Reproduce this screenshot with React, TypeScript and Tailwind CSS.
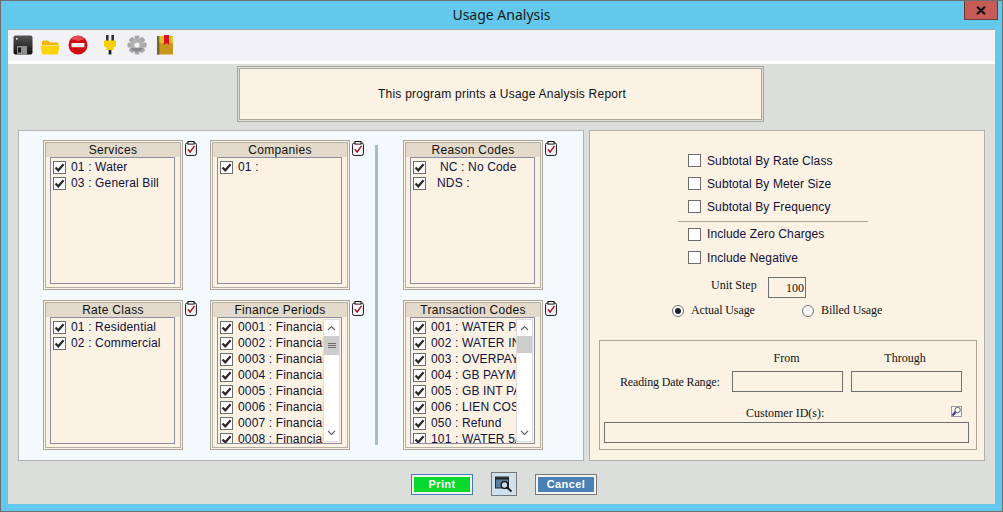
import React from "react";

function Check({ checked = true }: { checked?: boolean }) {
  return (
    <span className="w-[13px] h-[13px] shrink-0 border border-[#6d6d6d] bg-white flex items-center justify-center">
      {checked && (
        <svg width="11" height="11" viewBox="0 0 11 11">
          <path d="M1.5 5.5 L4.3 8.3 L9.6 2.2" fill="none" stroke="#2b2b2b" strokeWidth="2.3" />
        </svg>
      )}
    </span>
  );
}

function ClipIcon() {
  return (
    <svg width="12" height="15" viewBox="0 0 12 15" className="shrink-0 mt-px">
      <rect x="0.6" y="2" width="10.8" height="12.4" rx="1.6" fill="#fff" stroke="#111" strokeWidth="1" />
      <rect x="3" y="0.5" width="6" height="2.6" fill="#fff" stroke="#111" strokeWidth="1" />
      <path d="M2.8 8.2 L5.1 11 L9.5 4.8" fill="none" stroke="#a3121f" strokeWidth="1.4" />
    </svg>
  );
}

function Scrollbar({ thumb, grip }: { thumb: number; grip?: boolean }) {
  return (
    <div className="w-[17px] shrink-0 my-px mr-px bg-white border border-[#dcdcdc] flex flex-col items-stretch">
      <div className="h-[16px] shrink-0 flex items-center justify-center">
        <svg width="9" height="6" viewBox="0 0 9 6"><path d="M1 5 L4.5 1.5 L8 5" fill="none" stroke="#606060" strokeWidth="1.1" /></svg>
      </div>
      <div className="shrink-0 bg-[#cdcdcd] flex flex-col items-center justify-center gap-px" style={{ height: thumb }}>
        {grip && (
          <>
            <span className="w-[8px] h-px bg-[#6a6a6a]" />
            <span className="w-[8px] h-px bg-[#6a6a6a]" />
            <span className="w-[8px] h-px bg-[#6a6a6a]" />
          </>
        )}
      </div>
      <div className="flex-1" />
      <div className="h-[16px] shrink-0 flex items-center justify-center">
        <svg width="9" height="6" viewBox="0 0 9 6"><path d="M1 1 L4.5 4.5 L8 1" fill="none" stroke="#606060" strokeWidth="1.1" /></svg>
      </div>
    </div>
  );
}

type Row = { text: string; indent?: number };

function Group({ title, rows, thumb, grip }: { title: string; rows: Row[]; thumb?: number; grip?: boolean }) {
  return (
    <div className="flex gap-[2px] w-[154px]">
      <div className="w-[140px] h-[150px] shrink-0 border border-[#aaa69c] p-px bg-[#fbf2e3]">
        <div className="h-full border border-[#b5b0a6] flex flex-col">
          <div className="h-[14px] shrink-0 bg-[#e3dacb] text-center text-[12px] leading-[14px] tracking-[0.3px] text-[#111]">
            {title}
          </div>
          <div className="flex-1 min-h-0 ml-[4px] mr-[5px] mb-[3px] border border-[#8b8c9e] flex">
            <div className="flex-1 min-w-0 overflow-hidden pt-px pl-[2px]">
              {rows.map((r) => (
                <div key={r.text} className="h-[16px] flex items-center gap-[5px] whitespace-nowrap text-[12px] tracking-[0.15px] text-[#10103a]">
                  <Check />
                  <span style={r.indent ? { marginLeft: r.indent } : undefined}>{r.text}</span>
                </div>
              ))}
            </div>
            {thumb !== undefined && <Scrollbar thumb={thumb} grip={grip} />}
          </div>
        </div>
      </div>
      <ClipIcon />
    </div>
  );
}

function Opt({ label, h }: { label: string; h: number }) {
  return (
    <div className="flex items-center gap-[6px] text-[12px] tracking-[0.1px] text-[#10103a]" style={{ height: h }}>
      <Check checked={false} />
      <span>{label}</span>
    </div>
  );
}

function Radio({ on, label }: { on?: boolean; label: string }) {
  return (
    <div className="flex items-center gap-[7px]">
      <span className="w-[12px] h-[12px] rounded-full border border-[#707070] bg-white flex items-center justify-center">
        {on && <span className="w-[6px] h-[6px] rounded-full bg-[#222]" />}
      </span>
      <span className="pb-[2px] tracking-[-0.1px]">{label}</span>
    </div>
  );
}

const finance = ["0001", "0002", "0003", "0004", "0005", "0006", "0007", "0008"].map((c) => ({ text: `${c} : Financial Period` }));
const trans = ["001 : WATER PAYMENT", "002 : WATER INTEREST", "003 : OVERPAYMENT", "004 : GB PAYMENT", "005 : GB INT PAYMENT", "006 : LIEN COSTS", "050 : Refund", "101 : WATER 5/8"].map((text) => ({ text }));

const inputCls = "border border-[#6f6f6f] bg-[#fbf2e3] h-[21px]";

export default function App() {
  return (
    <div className="w-[1003px] h-[512px] border border-[#6b6f72] bg-[#62c9ec] relative overflow-hidden font-[Liberation_Sans]">
      <div className="h-[28px] flex items-center justify-center text-[14px] text-[#1a1a1a] font-[Noto_Sans] pb-[1px]">
        Usage Analysis
      </div>
      <div className="absolute top-0 right-[4px] w-[34px] h-[19px] bg-[#c75b55] border border-t-0 border-[#6b3a38] flex items-center justify-center">
        <svg width="10" height="9" viewBox="0 0 10 9"><path d="M1 0.8 L9 8.2 M9 0.8 L1 8.2" stroke="#111" strokeWidth="2.2" /></svg>
      </div>

      <div className="ml-[7px] w-[987px] h-[475px] bg-[#dcdedb] flex flex-col">
        <div className="h-[32px] shrink-0 bg-[#f2f1f5] border-t border-[#9ba6ab] flex items-center pl-[5px] pb-[1px]">
          <svg width="20" height="20" viewBox="0 0 20 20" className="ml-0">
            <defs>
              <linearGradient id="fl" x1="0" y1="0" x2="0" y2="1"><stop offset="0" stopColor="#555" /><stop offset="1" stopColor="#111" /></linearGradient>
            </defs>
            <rect x="0.5" y="0.5" width="19" height="19" rx="2" fill="url(#fl)" />
            <rect x="3" y="3" width="1.6" height="1.6" fill="#eee" />
            <rect x="4" y="11" width="10" height="8" fill="#8f8f8f" />
            <rect x="5" y="12.5" width="3" height="5" fill="#1a1a1a" />
          </svg>
          <svg width="20" height="16" viewBox="0 0 20 16" className="ml-[7px] mt-[4px]">
            <path d="M2 3 Q2 1.5 3.5 1.5 L8 1.5 L10 3.5 L17 3.5 Q18.5 3.5 18.5 5 L18.5 6 L2 6 Z" fill="#f2b705" />
            <path d="M0.5 6.5 L19.5 6.5 L18 15 Q18 15.5 17 15.5 L3 15.5 Q2 15.5 2 15 Z" fill="#ffd20a" />
          </svg>
          <svg width="20" height="20" viewBox="0 0 20 20" className="ml-[8px]">
            <circle cx="10" cy="10" r="9.5" fill="#cf0a12" />
            <path d="M3 4 A9 9 0 0 1 17 4 L10 6 Z" fill="#e24b50" />
            <rect x="3.5" y="8" width="13" height="4.2" fill="#f3f0ee" />
          </svg>
          <svg width="14" height="20" viewBox="0 0 14 20" className="ml-[15px]">
            <rect x="3" y="0" width="2.6" height="6" fill="#333" />
            <rect x="8.4" y="0" width="2.6" height="6" fill="#333" />
            <path d="M1 5.5 L13 5.5 L13 11 L10 13 L11 15 L3 15 L4 13 L1 11 Z" fill="#f6cf00" />
            <rect x="5.6" y="15" width="2.8" height="4.5" fill="#222" />
          </svg>
          <svg width="20" height="20" viewBox="0 0 20 20" className="ml-[10px]">
            <g fill="#a8a8a8">
              <rect x="7.5" y="0.5" width="5" height="19" rx="1" />
              <rect x="7.5" y="0.5" width="5" height="19" rx="1" transform="rotate(45 10 10)" />
              <rect x="7.5" y="0.5" width="5" height="19" rx="1" transform="rotate(90 10 10)" />
              <rect x="7.5" y="0.5" width="5" height="19" rx="1" transform="rotate(135 10 10)" />
            </g>
            <circle cx="10" cy="10" r="6.6" fill="#b0b0b0" />
            <path d="M4 13 A6.6 6.6 0 0 0 16 13 Z" fill="#8a8a8a" />
            <circle cx="10" cy="10" r="2.6" fill="#f2f1f5" />
          </svg>
          <svg width="16" height="20" viewBox="0 0 16 20" className="ml-[10px]">
            <rect x="0" y="1" width="16" height="18.5" fill="#c8961e" />
            <rect x="0" y="1" width="2.4" height="18.5" fill="#6f6a2c" />
            <rect x="2.4" y="1" width="13.6" height="7" fill="#e3c02a" />
            <path d="M7 0 L12 0 L12 10 L9.5 8 L7 10 Z" fill="#e0101c" />
          </svg>
        </div>
        <div className="h-[3px] shrink-0 bg-white" />

        <div className="ml-[229px] mt-[2px] w-[527px] h-[56px] shrink-0 border border-[#aaa69c] p-px">
          <div className="h-full border border-[#aaa69c] bg-[#fbf2e3] flex items-center justify-center pl-[3px] text-[12px] tracking-[0.23px] text-[#111]">
            This program prints a Usage Analysis Report
          </div>
        </div>

        <div className="mt-[8px] ml-[10px] flex gap-[5px]">
          <div className="w-[566px] h-[331px] border border-[#b0b2b2] bg-[#f4f9fd] pl-[24px] pt-[9px] flex">
            <div className="flex flex-col gap-[10px]">
              <Group title="Services" rows={[{ text: "01 : Water" }, { text: "03 : General Bill" }]} />
              <Group title="Rate Class" rows={[{ text: "01 : Residential" }, { text: "02 : Commercial" }]} />
            </div>
            <div className="flex flex-col gap-[10px] ml-[13px]">
              <Group title="Companies" rows={[{ text: "01 :" }]} />
              <Group title="Finance Periods" rows={finance} thumb={19} grip />
            </div>
            <div className="w-[3px] h-[300px] mt-[5px] ml-[11px] bg-[#a3bdd0]" />
            <div className="flex flex-col gap-[10px] ml-[25px]">
              <Group title="Reason Codes" rows={[{ text: "NC : No Code", indent: 9 }, { text: "NDS :", indent: 6 }]} />
              <Group title="Transaction Codes" rows={trans} thumb={17} />
            </div>
          </div>

          <div className="w-[396px] h-[331px] border border-[#b0aea8] bg-[#fbf2e3] relative">
            <div className="pl-[98px] pt-[18px]">
              <Opt label="Subtotal By Rate Class" h={23} />
              <Opt label="Subtotal By Meter Size" h={23} />
              <Opt label="Subtotal By Frequency" h={23} />
            </div>
            <div className="ml-[88px] mt-[3px] w-[190px] h-px bg-[#aaa69c]" />
            <div className="pl-[98px]">
              <Opt label="Include Zero Charges" h={24} />
              <Opt label="Include Negative" h={23} />
            </div>
            <div className="font-[Liberation_Serif] text-[12px] text-[#111]">
              <div className="flex items-center mt-[7px] ml-[121px]">
                <span className="w-[57px] pb-[4px]">Unit Step</span>
                <span className="w-[38px] h-[21px] border border-[#6f6f6f] text-right pr-[1px] leading-[20px]">100</span>
              </div>
              <div className="flex mt-[5px] ml-[82px] h-[16px] items-center">
                <div className="w-[130px]"><Radio on label="Actual Usage" /></div>
                <Radio label="Billed Usage" />
              </div>
              <div className="ml-[9px] mt-[21px] w-[378px] h-[110px] border border-[#aaa69c]">
                <div className="flex pl-[20px] pt-[8px] h-[30px]">
                  <span className="w-[111px]" />
                  <span className="w-[111px] text-center">From</span>
                  <span className="w-[8px]" />
                  <span className="w-[111px] text-center pr-[1px]">Through</span>
                </div>
                <div className="flex items-center pl-[20px]">
                  <span className="w-[99px] mr-[13px] whitespace-nowrap tracking-[-0.16px]">Reading Date Range:</span>
                  <div className={`w-[111px] ${inputCls}`} />
                  <div className={`w-[111px] ml-[8px] ${inputCls}`} />
                </div>
                <div className="flex h-[30px] items-end">
                  <span className="ml-[146px]">Customer ID(s):</span>
                  <svg width="11" height="11" viewBox="0 0 11 11" className="ml-[127px] mb-[5px]">
                    <rect x="0.5" y="0.5" width="10" height="10" fill="#f4f4f4" stroke="#9a9aa6" />
                    <circle cx="6.6" cy="4" r="2.7" fill="#fff" stroke="#555" strokeWidth="0.9" />
                    <path d="M4.6 6 L1.5 9.5" stroke="#3a2cb0" strokeWidth="2" />
                  </svg>
                </div>
                <div className={`ml-[4px] w-[365px] ${inputCls}`} />
              </div>
            </div>
          </div>
        </div>

        <div className="mt-[11px] ml-[403px] flex items-center">
          <div className="w-[62px] h-[21px] border border-[#3d7fb5] p-[2px] bg-[#f3f3f0]">
            <div className="h-full bg-[#07d92c] text-white text-[11px] font-bold tracking-[0.4px] flex items-center justify-center">Print</div>
          </div>
          <div className="ml-[18px] w-[26px] h-[24px] border border-[#777] bg-[#cfe0ee] flex items-center justify-center">
            <svg width="18" height="17" viewBox="0 0 18 17">
              <rect x="0.5" y="1" width="13" height="11" fill="#5a7ea0" stroke="#2a2a2a" />
              <rect x="1" y="1.5" width="12" height="2" fill="#222" />
              <circle cx="9.5" cy="9" r="3.3" fill="#c8dcea" stroke="#111" strokeWidth="1.2" />
              <path d="M12 11.5 L16.5 15.5" stroke="#111" strokeWidth="1.8" />
            </svg>
          </div>
          <div className="ml-[18px] w-[62px] h-[21px] border border-[#777] p-[2px] bg-[#f3f3f0]">
            <div className="h-full bg-[#4a80b4] text-white text-[11px] font-bold tracking-[0.4px] flex items-center justify-center">Cancel</div>
          </div>
        </div>
      </div>
    </div>
  );
}
